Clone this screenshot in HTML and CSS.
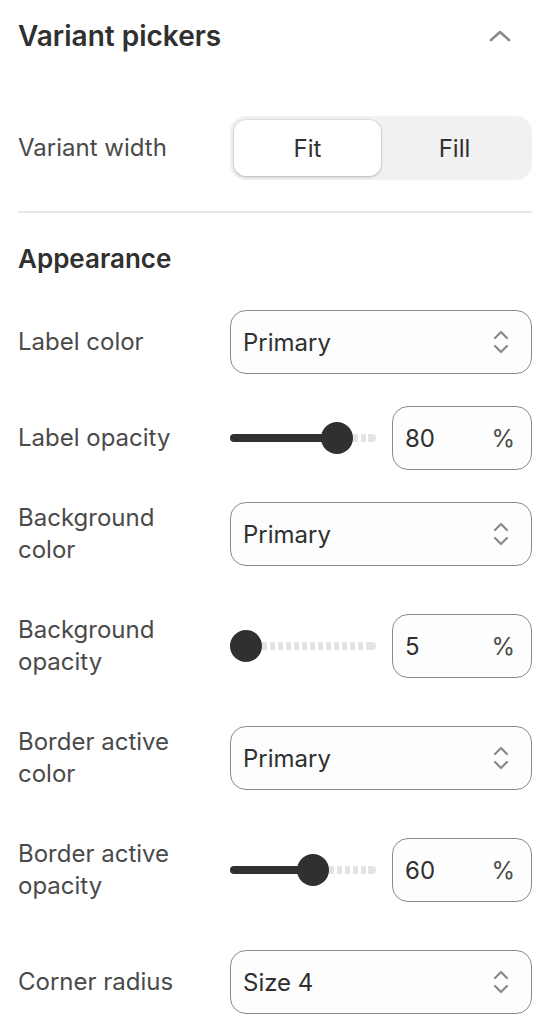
FILE: index.html
```html
<!DOCTYPE html>
<html lang="en">
<head>
    <meta charset="UTF-8">
    <meta name="viewport" content="width=device-width, initial-scale=1.0">
    <title>Variant pickers</title>
    <link rel="stylesheet" href="styles.css">
</head>
<body>
    <div class="panel">
        <header class="panel-head">
            <h1>Variant pickers</h1>
            <svg class="collapse" width="24" height="14" viewBox="0 0 24 14">
                <path d="M3 11 L12 3 L21 11" fill="none" stroke="#8a8a8a" stroke-width="2.6" stroke-linecap="round" stroke-linejoin="round"/>
            </svg>
        </header>

        <div class="row first">
            <div class="label">Variant width</div>
            <div class="segmented">
                <button class="seg active">Fit</button>
                <button class="seg">Fill</button>
            </div>
        </div>

        <hr class="divider">

        <h2>Appearance</h2>

        <div class="rows">
            <div class="row">
                <div class="label">Label color</div>
                <div class="select">
                    <span>Primary</span>
                    <svg class="updown" width="20" height="28" viewBox="0 0 20 28"><path d="M4 10 L10 4 L16 10 M4 18 L10 24 L16 18" fill="none" stroke="#8a8a8a" stroke-width="2.2" stroke-linecap="round" stroke-linejoin="round"/></svg>
                </div>
            </div>

            <div class="row">
                <div class="label">Label opacity</div>
                <div class="range-field">
                    <div class="slider" style="--v: 0.8">
                        <div class="fill"></div>
                        <div class="rest"></div>
                        <div class="thumb"></div>
                    </div>
                    <div class="number"><span>80</span><span class="unit">%</span></div>
                </div>
            </div>

            <div class="row tall">
                <div class="label">Background<br>color</div>
                <div class="select">
                    <span>Primary</span>
                    <svg class="updown" width="20" height="28" viewBox="0 0 20 28"><path d="M4 10 L10 4 L16 10 M4 18 L10 24 L16 18" fill="none" stroke="#8a8a8a" stroke-width="2.2" stroke-linecap="round" stroke-linejoin="round"/></svg>
                </div>
            </div>

            <div class="row tall">
                <div class="label">Background<br>opacity</div>
                <div class="range-field">
                    <div class="slider" style="--v: 0.0">
                        <div class="fill"></div>
                        <div class="rest"></div>
                        <div class="thumb"></div>
                    </div>
                    <div class="number"><span>5</span><span class="unit">%</span></div>
                </div>
            </div>

            <div class="row tall">
                <div class="label">Border active<br>color</div>
                <div class="select">
                    <span>Primary</span>
                    <svg class="updown" width="20" height="28" viewBox="0 0 20 28"><path d="M4 10 L10 4 L16 10 M4 18 L10 24 L16 18" fill="none" stroke="#8a8a8a" stroke-width="2.2" stroke-linecap="round" stroke-linejoin="round"/></svg>
                </div>
            </div>

            <div class="row tall">
                <div class="label">Border active<br>opacity</div>
                <div class="range-field">
                    <div class="slider" style="--v: 0.59">
                        <div class="fill"></div>
                        <div class="rest"></div>
                        <div class="thumb"></div>
                    </div>
                    <div class="number"><span>60</span><span class="unit">%</span></div>
                </div>
            </div>

            <div class="row">
                <div class="label">Corner radius</div>
                <div class="select">
                    <span>Size 4</span>
                    <svg class="updown" width="20" height="28" viewBox="0 0 20 28"><path d="M4 10 L10 4 L16 10 M4 18 L10 24 L16 18" fill="none" stroke="#8a8a8a" stroke-width="2.2" stroke-linecap="round" stroke-linejoin="round"/></svg>
                </div>
            </div>
        </div>
    </div>
</body>
</html>
```

FILE: styles.css
```css
body {
    margin: 0;
    padding: 0;
    font-family: Inter, "Noto Sans", sans-serif;
    background-color: #ffffff;
    color: #303030;
}

.panel {
    padding: 0 26px 0 18px;
}

.panel-head {
    display: flex;
    align-items: center;
    justify-content: space-between;
    height: 72px;
}

.panel-head h1 {
    margin: 0;
    font-size: 28px;
    font-weight: 600;
    color: #303030;
}

.collapse {
    margin-right: 20px;
}

h2 {
    margin: 0;
    height: 58px;
    display: flex;
    align-items: center;
    font-size: 26px;
    font-weight: 600;
    color: #303030;
}

.row {
    display: grid;
    grid-template-columns: 212px 1fr;
    align-items: center;
    min-height: 64px;
}

.row.first {
    margin-top: 44px;
}

.rows {
    display: flex;
    flex-direction: column;
    gap: 32px;
    margin-top: 23px;
}

.row.tall {
    align-items: start;
    min-height: 80px;
}

.label {
    font-size: 24px;
    line-height: 32px;
    color: #4a4a4a;
}

.divider {
    border: none;
    border-top: 2px solid #e6e6e6;
    margin: 31px 0 16px;
}

.segmented {
    display: flex;
    height: 64px;
    padding: 4px;
    box-sizing: border-box;
    background-color: #f1f1f1;
    border-radius: 16px;
}

.seg {
    flex: 1;
    border: none;
    background: none;
    font-family: inherit;
    font-size: 24px;
    color: #303030;
    border-radius: 12px;
}

.seg.active {
    background-color: #ffffff;
    box-shadow: 0 1px 3px rgba(0, 0, 0, 0.2), 0 0 0 1px rgba(0, 0, 0, 0.05);
}

.select {
    display: flex;
    align-items: center;
    justify-content: space-between;
    height: 64px;
    box-sizing: border-box;
    padding: 0 20px 0 12px;
    border: 1px solid #8a8a8a;
    border-radius: 16px;
    background-color: #fdfdfd;
    font-size: 24px;
    color: #303030;
}

.range-field {
    display: flex;
    align-items: center;
    gap: 16px;
}

.slider {
    position: relative;
    flex: 1;
    height: 32px;
    --thumb: calc(16px + var(--v) * (100% - 32px));
}

.slider .fill {
    position: absolute;
    left: 0;
    top: 12px;
    width: var(--thumb);
    height: 8px;
    border-radius: 4px 0 0 4px;
    background-color: #303030;
}

.slider .rest {
    position: absolute;
    left: calc(var(--thumb) + 16px);
    right: 0;
    top: 12px;
    height: 8px;
    border-radius: 0 4px 4px 0;
    background: linear-gradient(to left, #e3e3e3 8px, transparent 8px),
                repeating-linear-gradient(to right, #e3e3e3 0 5px, transparent 5px 8px);
}

.slider .thumb {
    position: absolute;
    top: 0;
    left: calc(var(--thumb) - 16px);
    width: 32px;
    height: 32px;
    border-radius: 50%;
    background-color: #303030;
}

.number {
    display: flex;
    align-items: center;
    justify-content: space-between;
    width: 140px;
    height: 64px;
    box-sizing: border-box;
    padding: 0 16px 0 12px;
    border: 1px solid #8a8a8a;
    border-radius: 16px;
    background-color: #fdfdfd;
    font-size: 24px;
    color: #303030;
}

.unit {
    color: #4a4a4a;
}
```
